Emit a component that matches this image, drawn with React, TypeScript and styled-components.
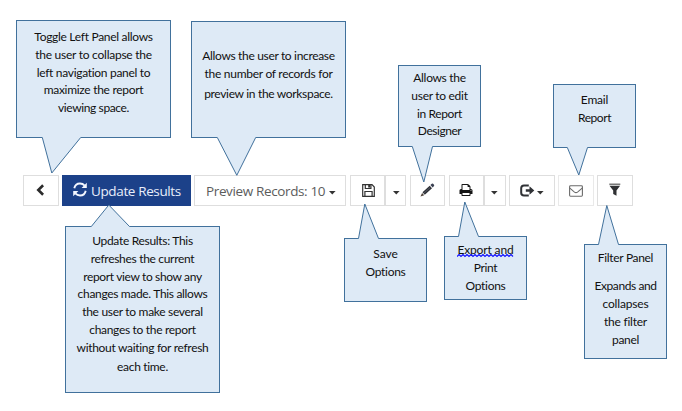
import React from 'react';
import styled, { createGlobalStyle } from 'styled-components';

const GlobalStyle = createGlobalStyle`
  *, *::before, *::after { box-sizing: border-box; }
  body { margin: 0; background: #fff; }
`;

const Page = styled.main`
  position: relative;
  width: 682px;
  height: 411px;
  overflow: hidden;
  background: #fff;
`;

const Toolbar = styled.div`
  display: flex;
  margin-left: 23px;
  padding-top: 175px;
  font: 13.5px/28px 'Open Sans', 'Segoe UI', sans-serif;
`;

const Segment = styled.button<{ $w: number; $left?: number; $gap?: number; $faint?: boolean }>`
  display: flex;
  align-items: flex-start;
  flex: none;
  width: ${p => p.$w}px;
  height: 31px;
  margin: 0 ${p => p.$gap ?? 0}px 0 0;
  padding: 0 0 0 ${p => p.$left ?? 0}px;
  border: 1px solid ${p => (p.$faint ? '#e9e9e9' : '#dedede')};
  background: #fff;
  color: #5c5c5c;
  font: inherit;
  letter-spacing: -0.37px;
  text-align: left;
  white-space: nowrap;

  & + &[data-joined] { border-left: 0; }
  svg { display: block; flex: none; }
`;

const PrimarySegment = styled(Segment)`
  border-color: #1c4189;
  background: #1c4189;
  color: #e8eefb;
`;

const Label = styled.span<{ $gap?: number }>`
  margin-left: ${p => p.$gap ?? 0}px;
  padding-top: 1px;
`;

const Glyph = styled.svg<{ $top: number; $left?: number }>`
  margin-top: ${p => p.$top}px;
  margin-left: ${p => p.$left ?? 0}px;
`;

const Caret = ({ top, left }: { top: number; left?: number }) => (
  <Glyph $top={top} $left={left} width="7" height="4" viewBox="0 0 7 4">
    <path d="M0 0h6.6L3.3 3.5z" fill="#333" />
  </Glyph>
);

const Note = styled.div<{ $x: number; $y: number; $w: number; $h: number; $pad: number }>`
  position: absolute;
  left: ${p => p.$x}px;
  top: ${p => p.$y}px;
  width: ${p => p.$w}px;
  height: ${p => p.$h}px;
  padding-top: ${p => p.$pad}px;
  border: 1px solid #41719c;
  background: #deeaf6;
  color: #111;
  font: 12px/18px Lato, Carlito, Calibri, sans-serif;
  text-align: center;
  white-space: nowrap;
`;

const Line = styled.div<{ $track: number; $shift: number }>`
  margin-top: ${p => p.$shift}px;
  letter-spacing: ${p => p.$track}px;
`;

const Flagged = styled.span`
  position: relative;
  display: inline-block;
`;

const Squiggle = styled.svg`
  position: absolute;
  left: 0;
  top: 13px;
`;

const Tail = styled.svg`
  position: absolute;
  left: 0;
  top: 0;
  pointer-events: none;
`;

type TextLine = [text: string, track: number, shift?: number];

interface NoteData {
  x: number; y: number; w: number; h: number; pad: number;
  tail: [from: number, to: number, tipX: number, tipY: number];
  lines: TextLine[];
  flagged?: boolean;
}

const notes: NoteData[] = [
  {
    x: 16, y: 20, w: 155, h: 118, pad: 7, tail: [42.3, 80.7, 51.8, 173],
    lines: [['Toggle Left Panel allows', -0.3], ['the user to collapse the', -0.25], ['left navigation panel to', -0.3], ['maximize the report', -0.29, -1], ['viewing space.', -0.38]],
  },
  {
    x: 191, y: 21, w: 155, h: 117, pad: 25, tail: [217.3, 255.7, 236.8, 175.3],
    lines: [['Allows the user to increase', -0.33], ['the number of records for', -0.27], ['preview in the workspace.', -0.32, 2]],
  },
  {
    x: 398, y: 65, w: 83, h: 82, pad: 3, tail: [412.3, 432.5, 423.8, 182],
    lines: [['Allows the', -0.3], ['user to edit', -0.29], ['in Report', -0.37], ['Designer', -0.47, -1]],
  },
  {
    x: 553, y: 84, w: 83, h: 64, pad: 6, tail: [567.3, 587.5, 578.8, 175],
    lines: [['Email', -0.2], ['Report', -0.45]],
  },
  {
    x: 65, y: 226, w: 155, h: 167, pad: 5, tail: [91.3, 129.5, 108.8, 205],
    lines: [['Update Results: This', -0.31], ['refreshes the current', -0.31], ['report view to show any', -0.36], ['changes made. This allows', -0.33, -1], ['the user to make several', -0.3], ['changes to the report', -0.31], ['without waiting for refresh', -0.31], ['each time.', -0.32, 1]],
  },
  {
    x: 344, y: 238, w: 83, h: 64, pad: 6, tail: [358.5, 378.5, 364.8, 204],
    lines: [['Save', -0.05], ['Options', -0.29]],
  },
  {
    x: 444, y: 236, w: 83, h: 64, pad: 4, tail: [458.5, 478.5, 464.8, 202], flagged: true,
    lines: [['Export and', -0.14], ['Print', -0.32], ['Options', -0.29]],
  },
  {
    x: 584, y: 244, w: 83, h: 115, pad: 4, tail: [598.5, 618.5, 606.8, 205.5],
    lines: [['Filter Panel', -0.32], ['Expands and', -0.41, 10], ['collapses', -0.17], ['the filter', -0.24], ['panel', -0.32]],
  },
];

const squigglePath = 'M0 2.5' + Array.from({ length: 14 }, () => 'l2 -2l2 2').join('');

function Callout({ note }: { note: NoteData }) {
  return (
    <Note $x={note.x} $y={note.y} $w={note.w} $h={note.h} $pad={note.pad}>
      {note.lines.map(([text, track, shift], i) => (
        <Line key={text} $track={track} $shift={shift ?? 0}>
          {note.flagged && i === 0 ? (
            <Flagged>
              {text}
              <Squiggle width="58" height="4">
                <path d={squigglePath} fill="none" stroke="#1414ff" strokeWidth="1.2" />
              </Squiggle>
            </Flagged>
          ) : text}
        </Line>
      ))}
    </Note>
  );
}

function Tails() {
  return (
    <Tail width="682" height="411">
      {notes.map(({ x, y, h, tail: [from, to, tipX, tipY] }) => {
        const down = tipY > y;
        const edge = down ? y + h - 0.5 : y + 0.5;
        const inner = down ? edge - 0.7 : edge + 0.7;
        return (
          <g key={x}>
            <path d={`M${from} ${inner}L${from} ${edge}L${tipX} ${tipY}L${to} ${edge}L${to} ${inner}z`} fill="#deeaf6" />
            <path d={`M${from} ${edge}L${tipX} ${tipY}L${to} ${edge}`} fill="none" stroke="#41719c" />
          </g>
        );
      })}
    </Tail>
  );
}

export default function App() {
  return (
    <>
      <GlobalStyle />
      <Page>
        <Toolbar>
          <Segment $w={36} $left={12} $gap={3} aria-label="Toggle left panel">
            <Glyph $top={8} width="9" height="12" viewBox="0 0 9 12">
              <path d="M7.1 1.3L2.3 6L7.1 10.7" fill="none" stroke="#2b2b2b" strokeWidth="2.6" />
            </Glyph>
          </Segment>
          <PrimarySegment $w={129} $left={10} $gap={3}>
            <Glyph $top={6} width="15" height="15" viewBox="0 0 15 15">
              <path d="M1.300 6.300C1.900 3.200 4.300 1.500 7 1.500C9 1.500 10.500 2.300 11.700 3.600M12.700 8.700C12.100 11.800 9.700 13.500 7 13.500C5 13.500 3.500 12.700 2.300 11.400" fill="none" stroke="#f4f7ff" strokeWidth="1.900" />
              <path d="M13.800.8V6H8.600zM.2 14.200V9H5.400z" fill="#f4f7ff" />
            </Glyph>
            <Label $gap={3}>Update Results</Label>
          </PrimarySegment>
          <Segment $w={152} $left={11} $gap={4}>
            <Label>Preview Records: 10</Label>
            <Caret top={15} left={4} />
          </Segment>
          <Segment $w={35} $left={11} aria-label="Save">
            <Glyph $top={8} width="13" height="13" viewBox="0 0 13 13" fill="none" stroke="#333" strokeWidth="1.2">
              <path d="M.7.7h9.300l2.300 2.300v9.300H.7z" />
              <path d="M3.300.7v3.800h5.600V.7M2.900 12.300V7.500h7.200v4.800" />
              <path d="M6.200 1h1.900v2.600H6.200z" fill="#333" stroke="none" />
            </Glyph>
          </Segment>
          <Segment $w={21} $left={7} $gap={4} data-joined aria-label="Save menu">
            <Caret top={15} />
          </Segment>
          <Segment $w={35} $left={9} $gap={4} aria-label="Edit">
            <Glyph $top={7} width="15" height="14" viewBox="0 0 15 14">
              <path d="M2.500 9.300L9.700 2.700L12 5.200L4.800 11.700z" fill="#2e3036" />
              <path d="M10.400 2L11.800.7q.7-.5 1.300.1l.9 1q.5.700 0 1.200L12.700 4.500z" fill="#3a4152" />
              <path d="M2.100 9.900L4.200 12.300L.5 13.500z" fill="#4c4038" />
              <path d="M3.800 10.300L10.300 4.400" stroke="#7c8797" strokeWidth=".5" />
            </Glyph>
          </Segment>
          <Segment $w={35} $left={9} aria-label="Print">
            <Glyph $top={8} width="14" height="12" viewBox="0 0 1664 1536" fill="#161616">
              <path transform="translate(0 -128)" d="M384 1536h896v-256h-896v256zM384 896h896v-384h-160q-40 0-68-28t-28-68v-160h-640v640zM1536 960q0-26-19-45t-45-19-45 19-19 45 19 45 45 19 45-19 19-45zM1664 960v416q0 13-9.500 22.500t-22.500 9.500h-224v160q0 40-28 68t-68 28h-960q-40 0-68-28t-28-68v-160h-224q-13 0-22.500-9.500t-9.500-22.500v-416q0-79 56.500-135.500t135.500-56.500h64v-544q0-40 28-68t68-28h672q40 0 88 20t76 48l152 152q28 28 48 76t20 88v256h64q79 0 135.500 56.500t56.500 135.500z" />
            </Glyph>
          </Segment>
          <Segment $w={22} $left={6} $gap={3} data-joined aria-label="Print menu">
            <Caret top={15} />
          </Segment>
          <Segment $w={46} $left={10} $gap={3} aria-label="Export">
            <Glyph $top={8} width="15" height="13" viewBox="0 0 15 13">
              <path d="M8.800 1.500H4Q1.200 1.500 1.200 4.300V8.700Q1.200 11.500 4 11.500H8.800" fill="none" stroke="#303236" strokeWidth="2" />
              <path d="M5.800 5.200H9.500V2.300L14.300 6.500L9.500 10.700V7.800H5.800z" fill="#303236" />
            </Glyph>
            <Caret top={15} left={2} />
          </Segment>
          <Segment $w={36} $left={10} $gap={3} $faint aria-label="Email">
            <Glyph $top={9} width="14" height="12" viewBox="0 0 14 12" fill="none" stroke="#6b6b6b" strokeWidth="1.100">
              <rect x=".6" y=".8" width="12.800" height="10.400" rx=".9" />
              <path d="M.8 3.200L5.500 7.100Q7 8.200 8.500 7.100L13.200 3.200" />
            </Glyph>
          </Segment>
          <Segment $w={36} $left={11} aria-label="Filter panel">
            <Glyph $top={7} width="12" height="13" viewBox="0 0 12 13">
              <path d="M.3.600h11v1.200H.3z" fill="#555" />
              <path d="M.5 2.700h10.600L7.500 7.400v5.400L4.200 11V7.400z" fill="#2f3033" />
            </Glyph>
          </Segment>
        </Toolbar>
        {notes.map(note => <Callout key={note.x} note={note} />)}
        <Tails />
      </Page>
    </>
  );
}
